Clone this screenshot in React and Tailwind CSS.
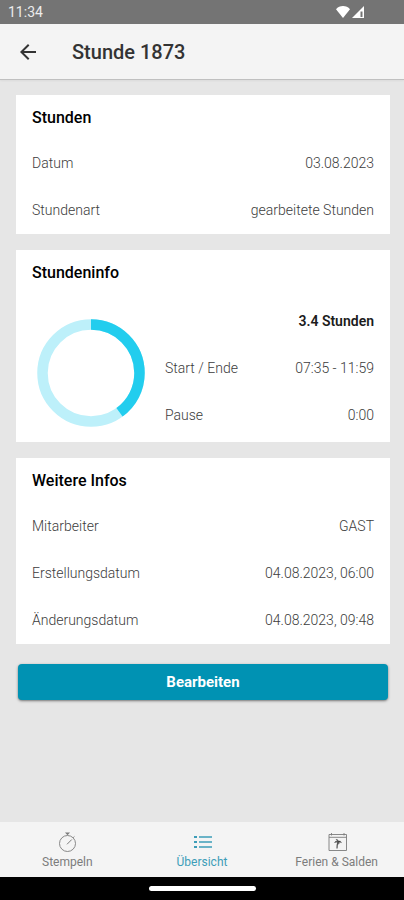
const stundenRows = [
  { label: "Datum", value: "03.08.2023" },
  { label: "Stundenart", value: "gearbeitete Stunden" },
];

const infoRows = [
  { label: "", value: "3.4 Stunden", strong: true },
  { label: "Start / Ende", value: "07:35 - 11:59" },
  { label: "Pause", value: "0:00" },
];

const weitereRows = [
  { label: "Mitarbeiter", value: "GAST" },
  { label: "Erstellungsdatum", value: "04.08.2023, 06:00" },
  { label: "Änderungsdatum", value: "04.08.2023, 09:48" },
];

const StatusBar = () => (
  <div className="flex h-6 shrink-0 items-center justify-between bg-[#747474] pr-10 pl-2 text-white">
    <span className="text-sm leading-6 text-[#ececec]">11:34</span>
    <div className="flex items-center gap-px">
      <svg className="h-3 w-4" viewBox="0 0 16 12" fill="currentColor" aria-hidden="true">
        <path d="M8 12 1 3.200C2.800 1.200 5.200 0 8 0s5.200 1.200 7 3.200z" />
      </svg>
      <svg className="h-3 w-3" viewBox="0 0 12 12" aria-hidden="true">
        <path d="M0 12 12 0v12z" fill="currentColor" />
        <path d="M8.500 5.500h2V11h-2z" fill="#747474" />
      </svg>
    </div>
  </div>
);

const Header = ({ title }) => (
  <header className="flex h-14 shrink-0 items-center gap-8 border-b border-[#c0c0c0] bg-[#f4f4f4] pl-4 shadow-xs">
    <button type="button" aria-label="Zurück" className="flex size-6 items-center justify-center text-[#333]">
      <svg className="size-6" viewBox="0 0 24 24" fill="currentColor" aria-hidden="true">
        <path d="M20 11H7.830l5.590-5.590L12 4l-8 8 8 8 1.410-1.410L7.830 13H20z" />
      </svg>
    </button>
    <h1 className="text-xl font-medium text-[#333]">{title}</h1>
  </header>
);

const Rows = ({ rows }) => (
  <dl>
    {rows.map((row) => (
      <div key={row.value} className="flex h-[47px] justify-between text-sm leading-[47px]">
        <dt className="font-light text-[#3c3c3c]">{row.label}</dt>
        <dd className={row.strong ? "font-semibold text-[#1c1c1c]" : "font-light text-[#3c3c3c]"}>{row.value}</dd>
      </div>
    ))}
  </dl>
);

const Card = ({ title, children }) => (
  <section className="bg-white px-4">
    <h2 className="h-[45px] text-base leading-[45px] font-medium text-black">{title}</h2>
    {children}
  </section>
);

// value is the filled share of the ring, 0 to 1
const Donut = ({ value }) => (
  <svg className="size-[108px] shrink-0 -rotate-90" viewBox="0 0 108 108" fill="none" aria-hidden="true">
    <circle cx="54" cy="54" r="48.500" stroke="#bdf0fa" strokeWidth="10.500" />
    <circle
      cx="54"
      cy="54"
      r="48.500"
      stroke="#22cdee"
      strokeWidth="10.500"
      pathLength="100"
      strokeDasharray={`${value * 100} 100`}
    />
  </svg>
);

const StopwatchIcon = () => (
  <svg className="size-5" viewBox="0 0 20 20" fill="none" stroke="currentColor" aria-hidden="true">
    <circle cx="10.500" cy="11.500" r="8" strokeWidth="0.900" />
    <path d="M8 .500h5L10.500 3.300z" fill="currentColor" stroke="none" />
    <path d="m10 12.300 4.800-4.800M16.200 5.700l1.200-1.200" />
  </svg>
);

const ListIcon = () => (
  <svg className="size-5" viewBox="0 0 20 20" fill="none" stroke="currentColor" strokeWidth="1.800" aria-hidden="true">
    <path d="M2 5h3M2 10h3M2 15h3" />
    <path d="M7 5h13M7 10h13M7 15h13" strokeWidth="1.500" />
  </svg>
);

const HolidayIcon = () => (
  <svg className="size-5" viewBox="0 0 20 20" fill="none" stroke="currentColor" aria-hidden="true">
    <path d="M2 2.500h17.500v16H2zM2 5.300h17.500M4.500 1v2.500M17 1v2.500" strokeWidth="0.900" />
    <path d="M11 9.500c-.700 2.300-1 4.500-1 7" stroke="#555" strokeWidth="1.200" />
    <path d="M11 10c-1.500-1-2.700-.800-3.500.500 1.200-.300 2.300-.400 3.500-.500.600.700.700 1.500.500 2.300.800-.700.900-1.500.600-2.200l2.400.500c-.500-1.300-1.700-1.800-3-1.500C11.200 7.900 10.200 7.300 8.900 7.500c1 .600 1.700 1.400 2.100 2.500z" fill="#444" stroke="#444" strokeWidth="0.400" />
  </svg>
);

const tabs = [
  { label: "Stempeln", Icon: StopwatchIcon },
  { label: "Übersicht", Icon: ListIcon, active: true },
  { label: "Ferien & Salden", Icon: HolidayIcon },
];

const TabBar = () => (
  <nav className="grid h-[55px] shrink-0 grid-cols-3 bg-[#f4f4f4]">
    {tabs.map(({ label, Icon, active }) => (
      <a
        key={label}
        href="#"
        aria-current={active ? "page" : undefined}
        className={`flex flex-col items-center gap-px pt-[10px] text-xs leading-[18px] ${
          active ? "text-[#3d9db8]" : "text-[#7c7c7c]"
        }`}
      >
        <Icon />
        {label}
      </a>
    ))}
  </nav>
);

const App = () => {
  return (
    <div className="flex min-h-screen flex-col bg-[#e6e6e6] font-['Roboto',sans-serif]">
      <StatusBar />
      <Header title="Stunde 1873" />

      <main className="flex grow flex-col gap-4 py-[15px] pr-[14px] pl-4">
        <Card title="Stunden">
          <Rows rows={stundenRows} />
        </Card>

        <Card title="Stundeninfo">
          <div className="flex items-end gap-5 py-[3px] pl-[5px]">
            <div className="pb-3">
              <Donut value={0.4} />
            </div>
            <div className="grow">
              <Rows rows={infoRows} />
            </div>
          </div>
        </Card>

        <Card title="Weitere Infos">
          <Rows rows={weitereRows} />
        </Card>

        <div className="px-0.5 pt-1">
          <button
            type="button"
            className="h-9 w-full rounded-sm bg-[#0092b3] text-[15px] leading-[34px] font-bold text-white shadow-sm shadow-black/40"
          >
            Bearbeiten
          </button>
        </div>
      </main>

      <TabBar />
      <div className="flex h-[23px] shrink-0 items-center justify-center bg-black">
        <div className="h-[5px] w-[107px] rounded-full bg-white" />
      </div>
    </div>
  );
};

export default App;
